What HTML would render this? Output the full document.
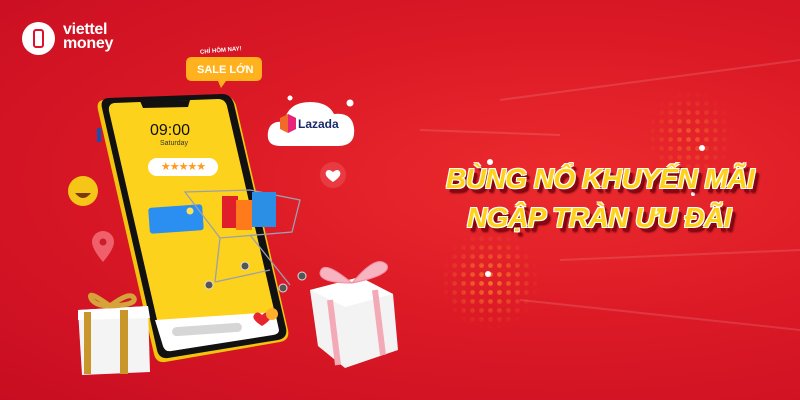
<!DOCTYPE html>
<html><head><meta charset="utf-8"><style>
*{margin:0;padding:0;box-sizing:border-box}
body{width:800px;height:400px;overflow:hidden;position:relative;font-family:"Liberation Sans",sans-serif;
background:radial-gradient(ellipse at 70% 45%,#ec2b2e 0%,#dc1a26 45%,#c80d22 100%);}
.a{position:absolute}
.title{font-family:"Liberation Sans","Noto Sans CJK SC",sans-serif;font-weight:900;font-style:italic;color:#ffd21a;
text-shadow:1px 1px 0 #fff,-1px -1px 0 #fff,1px -1px 0 #fff,-1px 1px 0 #fff,3px 4px 0 #8a0612,4px 5px 2px #5a0008;white-space:nowrap;letter-spacing:-0.5px}
</style></head><body>
<svg class="a" style="left:0;top:0" width="800" height="400">
<defs>
<pattern id="dots" width="9" height="9" patternUnits="userSpaceOnUse"><circle cx="4.5" cy="4.5" r="2.4" fill="#ff9a2a"/></pattern>
<radialGradient id="m1"><stop offset="0" stop-color="#fff"/><stop offset="1" stop-color="#fff" stop-opacity="0"/></radialGradient>
<mask id="mk1"><circle cx="490" cy="280" r="50" fill="url(#m1)"/></mask>
<mask id="mk2"><circle cx="690" cy="135" r="45" fill="url(#m1)"/></mask>
</defs>
<g opacity=".12" stroke="#fff" stroke-width="2">
<line x1="500" y1="100" x2="800" y2="60"/><line x1="520" y1="300" x2="800" y2="330"/><line x1="560" y1="260" x2="800" y2="250"/><line x1="420" y1="130" x2="560" y2="135"/>
</g>
<rect x="430" y="220" width="120" height="120" fill="url(#dots)" mask="url(#mk1)" opacity=".7"/>
<rect x="640" y="85" width="100" height="100" fill="url(#dots)" mask="url(#mk2)" opacity=".45"/>
<g fill="#fff"><circle cx="488" cy="274" r="3"/><circle cx="490" cy="162" r="3"/><circle cx="702" cy="148" r="3"/><circle cx="693" cy="194" r="2"/></g>
<path d="M103 100 L222 95 Q232 95 236 105 L288 330 Q290 340 280 342 L165 362 Q156 363 154 354 L98 110 Q96 101 103 100Z" fill="#f2c40e"/>
<path d="M108 98 L222 94 Q231 94 234 104 L286 328 Q288 338 278 340 L168 358 Q159 359 157 350 L102 108 Q100 99 108 98Z" fill="#111"/>
<path d="M114 103 L218 99 Q225 99 227 106 L278 327 Q279 333 273 334 L171 351 Q165 352 163 346 L109 111 Q108 104 114 103Z" fill="#fdd21c"/>
<path d="M140 101 L190 100 L188 107 L143 108Z" fill="#111"/>
<path d="M155 320 L275 312 L279 330 Q279 334 273 335 L171 351 Q165 352 163 346Z" fill="#fff"/>
<rect x="172" y="325" width="70" height="9" rx="4.5" fill="#d6d6d6" transform="rotate(-4 207 330)"/>
<path d="M262 315 q-5 -5 -8 0 q-3 4 8 11 q11 -7 8 -11 q-3 -5 -8 0z" fill="#e8252e"/>
<circle cx="272" cy="314" r="6" fill="#ffb02a"/>
<rect x="97" y="128" width="4" height="14" fill="#1a4fb0"/>
<rect x="149" y="206" width="54" height="26" rx="3" fill="#2a8ff0" transform="rotate(-4 176 219)"/>
<circle cx="190" cy="211" r="3.5" fill="#ffe05a"/>
<g stroke="#9aa0b0" stroke-width="1.3" fill="none">
<path d="M185 192 L250 190 L300 200 L292 232 L220 238 Z"/><path d="M220 238 L215 282 M250 235 L290 285 M215 282 L270 270"/>
</g>
<rect x="222" y="196" width="16" height="32" fill="#e01f2a"/><rect x="236" y="200" width="16" height="30" fill="#ff7a1a"/><rect x="252" y="192" width="24" height="35" fill="#2b8fe5"/>
<g fill="#555" stroke="#ddd"><circle cx="209" cy="285" r="4"/><circle cx="245" cy="266" r="4"/><circle cx="283" cy="288" r="4"/><circle cx="302" cy="276" r="4"/></g>
<circle cx="83" cy="191" r="15" fill="#f5c518"/><path d="M75 193 q8 10 16 0z" fill="#7a3a10"/>
<path d="M103 262 q-11 -13 -11 -20 a11 11 0 0 1 22 0 q0 7 -11 20z" fill="#f0606a"/><circle cx="103" cy="242" r="3.5" fill="#c81e2e"/>
<circle cx="333" cy="175" r="13" fill="#e93a42"/><path d="M333 182 q-9 -6 -7 -10 q2 -4 7 0 q5 -4 7 0 q2 4 -7 10z" fill="#fff"/>
<path d="M280 146 q-14 0 -12 -14 q2 -12 16 -10 q4 -20 26 -20 q18 0 24 12 q18 -2 20 14 q2 18 -16 18z" fill="#fff"/>
<circle cx="290" cy="98" r="2.5" fill="#fff"/><circle cx="350" cy="103" r="3.5" fill="#fff"/>
<path d="M280 118 l8 -4 l8 4 l0 11 l-8 4 l-8 -4z" fill="#f26a2a"/><path d="M288 114 l8 4 l0 11 l-8 4z" fill="#e8247a"/>
<path d="M186 63 q0 -6 6 -6 h64 q6 0 6 6 v12 q0 6 -6 6 h-30 l-5 7 l-3 -7 h-26 q-6 0 -6 -6z" fill="#ffb21e"/>
<path d="M78 310 L148 306 L150 372 L82 375Z" fill="#f4f4f4"/><path d="M78 310 L148 306 L150 318 L78 320Z" fill="#fff"/>
<rect x="84" y="312" width="7" height="62" fill="#c8962a"/><rect x="120" y="310" width="8" height="64" fill="#c8962a"/>
<path d="M110 306 q-25 -18 -18 -6 q5 6 18 6 q20 -15 24 -8 q3 7 -24 8z" fill="none" stroke="#d6a23a" stroke-width="5"/>
<path d="M310 290 L360 277 L393 294 L398 350 L345 368 L318 346Z" fill="#f3f3f3"/><path d="M310 290 L360 277 L393 294 L345 307Z" fill="#fff"/>
<path d="M330 300 L338 365" stroke="#f4a9b6" stroke-width="6"/><path d="M375 290 L383 355" stroke="#f4a9b6" stroke-width="6"/>
<path d="M352 283 q-30 -25 -32 -10 q0 10 32 10 q25 -30 35 -18 q5 10 -35 18z" fill="#f7b3c0" stroke="#ee8fa2"/>
</svg>
<div class="a" style="left:22px;top:22px;width:33px;height:33px;border-radius:50%;background:#fff"></div>
<div class="a" style="left:33px;top:29px;width:11px;height:19px;border:2.5px solid #e0102a;border-radius:3px"></div>
<div class="a" style="left:63px;top:23px;color:#fff;font-size:16px;line-height:14px;font-weight:bold;letter-spacing:-0.3px">viettel<br>money</div>
<div class="a" style="left:200px;top:48px;color:#fff;font-size:6px;font-weight:900;transform:rotate(-5deg)">CHỈ HÔM NAY!</div>
<div class="a" style="left:197px;top:64px;color:#fff;font-size:11px;font-weight:900">SALE LỚN</div>
<div class="a" style="left:298px;top:117px;color:#1a2a6a;font-size:12px;font-weight:600">Lazada</div>
<div class="a" style="left:150px;top:122px;color:#111;font-size:16px">09:00</div>
<div class="a" style="left:160px;top:140px;color:#333;font-size:7px">Saturday</div>
<div class="a" style="left:148px;top:158px;width:70px;height:18px;border-radius:9px;background:#fff;color:#ff9a1a;font-size:11px;text-align:center;line-height:18px;letter-spacing:-1px">★★★★★</div>
<div class="a title" style="left:446px;top:163px;font-size:28px">BÙNG NỔ KHUYẾN MÃI</div>
<div class="a title" style="left:467px;top:202px;font-size:28px">NGẬP TRÀN ƯU ĐÃI</div>
</body></html>
